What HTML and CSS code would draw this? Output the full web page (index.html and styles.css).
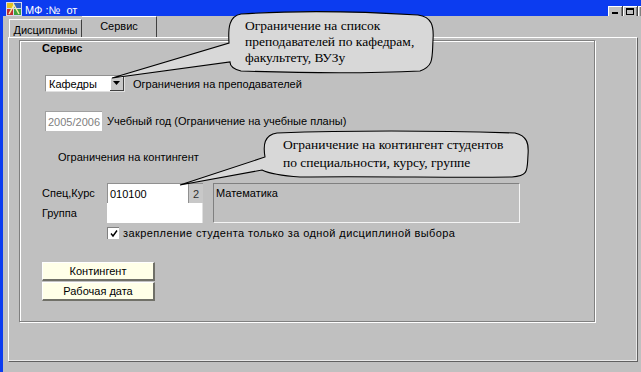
FILE: index.html
```html
<!DOCTYPE html>
<html lang="ru">
<head>
<meta charset="utf-8">
<title>МФ</title>
<link rel="stylesheet" href="styles.css">
</head>
<body>
<div class="window">
  <div class="titlebar">
    <svg class="appicon" viewBox="0 0 16 14" width="16" height="14">
      <rect x="0" y="0" width="16" height="14" fill="#d8d8f0"/>
      <rect x="1" y="1" width="6" height="5" fill="#e0c020"/>
      <rect x="8" y="1" width="7" height="5" fill="#3060c0"/>
      <rect x="1" y="7" width="6" height="6" fill="#c03030"/>
      <rect x="8" y="7" width="7" height="6" fill="#40a040"/>
      <path d="M3 12 L8 3 L13 12" fill="none" stroke="#f8f0a0" stroke-width="1.5"/>
    </svg>
    <span class="title">МФ :№  от</span>
    <div class="tbtns">
      <span class="tbtn"><span class="g-min"></span></span>
      <span class="tbtn"><span class="g-max"></span></span>
      <span class="tbtn cut"></span>
    </div>
  </div>

  <div class="tabs">
    <div class="tab disc">Дисциплины</div>
    <div class="tab serv">Сервис</div>
  </div>

  <div class="panel">
    <div class="group">
      <div class="gtitle">Сервис</div>

      <div class="row r-dept">
        <div class="combo">
          <span class="combo-text">Кафедры</span>
          <span class="combo-btn"><svg viewBox="0 0 7 4" width="7" height="4"><path d="M0 0 H7 L3.5 4 Z" fill="#000"/></svg></span>
        </div>
        <span class="lbl-dept">Ограничения на преподавателей</span>
      </div>

      <div class="row r-year">
        <div class="field-year">2005/2006</div>
        <span class="lbl-year">Учебный год (Ограничение на учебные планы)</span>
      </div>

      <div class="sect">Ограничения на контингент</div>

      <div class="contgrid">
        <span class="glbl l-spec">Спец,Курс</span>
        <div class="spec"><span class="spec-code">010100</span><span class="spec-course">2</span></div>
        <div class="specname">Математика</div>
        <span class="glbl l-grp">Группа</span>
        <div class="grp"></div>
      </div>

      <div class="chk">
        <span class="chkbox"><svg viewBox="0 0 10 10" width="10" height="10"><path d="M2 4.5 L4 7 L8 1.5" fill="none" stroke="#000" stroke-width="1.4"/></svg></span>
        <span class="chklbl">закрепление студента только за одной дисциплиной выбора</span>
      </div>

      <div class="btns">
        <div class="btn">Контингент</div>
        <div class="btn">Рабочая дата</div>
      </div>
    </div>
  </div>

  <div class="callouts">
    <svg class="balloons" viewBox="0 0 641 372" width="641" height="372">
      <path d="M241 14 C300 10 370 12 418 15 C432 17 434 26 433 40 C432 58 434 66 420 71 C360 74 300 73 241 71 C233 69 230 66 230 62 L112 78 L229 43 C228 28 229 16 241 14 Z" fill="#d8d8d8" stroke="#000" stroke-width="1.1"/>
      <path d="M277 133 C360 130 450 131 515 133 C527 136 529 143 528 155 C527 170 529 176 512 177 C450 178 380 176 300 177 C285 176 270 174 262 170 L180 185 L265 157 C263 145 264 135 277 133 Z" fill="#d8d8d8" stroke="#000" stroke-width="1.1"/>
    </svg>
    <div class="ctext c1">Ограничение на список<br>преподавателей по кафедрам,<br>факультету, ВУЗу</div>
    <div class="ctext c2">Ограничение на контингент студентов<br>по специальности, курсу, группе</div>
  </div>
</div>
</body>
</html>
```

FILE: styles.css
```css
* { box-sizing: border-box; }
html, body { margin: 0; padding: 0; }
body {
  width: 641px;
  height: 372px;
  overflow: hidden;
  background: #c0c0c0;
  font-family: "Liberation Sans", Arial, sans-serif;
  font-size: 11px;
  color: #000;
}

.window {
  position: relative;
  width: 641px;
  height: 372px;
  border-left: 3px solid #0c3cf0;
  background: #c0c0c0;
}

/* title bar */
.titlebar {
  height: 16px;
  background: #0c3cf0;
  display: flex;
  align-items: flex-start;
  color: #fff;
  padding-left: 3px;
}
.appicon { margin-top: 2px; flex: none; }
.title {
  margin-left: 3px;
  margin-top: 4px;
  white-space: pre;
  font-size: 11px;
  line-height: 12px;
}
.tbtns {
  margin-left: auto;
  display: flex;
  margin-top: 6px;
}
.tbtn {
  width: 15px;
  height: 10px;
  background: #c0c0c0;
  border-right: 1px solid #404040;
  box-shadow: inset 1px 1px 0 #fff, inset -1px 0 0 #808080;
  position: relative;
  display: flex;
  align-items: flex-end;
  justify-content: center;
}
.tbtn.cut { width: 3px; border-right: 0; }
.g-min {
  width: 6px;
  height: 2px;
  background: #000;
  margin-bottom: 2px;
}
.g-max {
  width: 8px;
  height: 7px;
  border: 1px solid #000;
  border-top-width: 2px;
  margin-bottom: 1px;
}

/* tabs */
.tabs {
  display: flex;
  align-items: flex-end;
  height: 21px;
  padding-left: 6px;
}
.tab {
  display: flex;
  align-items: center;
  justify-content: center;
  background: #c0c0c0;
  border-top: 1px solid #fff;
  border-left: 1px solid #fff;
  border-right: 1px solid #404040;
  font-size: 11px;
}
.tab.disc { width: 73px; height: 18px; padding-top: 3px; }
.tab.serv { width: 75px; height: 21px; border-left: 0; padding-bottom: 2px; }

/* panel */
.panel {
  margin-left: 5px;
  width: 630px;
  height: 325px;
  border-top: 1px solid #fff;
  border-left: 1px solid #fff;
  border-right: 1px solid #606060;
  border-bottom: 1px solid #606060;
  box-shadow: inset -1px -1px 0 #e8e8e8;
}

.group {
  margin: 2px 0 0 10px;
  width: 576px;
  height: 282px;
  border: 1px solid #808080;
  box-shadow: 1px 1px 0 #fff, inset 1px 1px 0 #fff;
  display: flex;
  flex-direction: column;
  align-items: flex-start;
}

.gtitle {
  margin: 1px 0 0 22px;
  font-weight: bold;
  line-height: 13px;
}

.row {
  display: flex;
  align-items: center;
}
.r-dept { margin: 20px 0 0 25px; }
.combo {
  width: 80px;
  height: 17px;
  background: #fff;
  border-top: 1px solid #909090;
  border-left: 1px solid #909090;
  border-right: 1px solid #e0e0e0;
  border-bottom: 1px solid #e0e0e0;
  display: flex;
  align-items: center;
  justify-content: space-between;
}
.combo-text { padding-left: 3px; }
.combo-btn {
  width: 14px;
  height: 14px;
  background: #c8c8c8;
  border-right: 1px solid #404040;
  border-bottom: 1px solid #404040;
  box-shadow: inset 1px 1px 0 #fff;
  display: flex;
  align-items: center;
  justify-content: center;
}
.lbl-dept { margin-left: 8px; }

.r-year { margin: 19px 0 0 25px; }
.field-year {
  width: 57px;
  height: 20px;
  background: #fff;
  color: #808080;
  border-top: 1px solid #a0a0a0;
  border-left: 1px solid #a0a0a0;
  display: flex;
  align-items: center;
  padding-left: 2px;
}
.lbl-year { margin-left: 5px; }

.sect {
  margin: 20px 0 0 38px;
  line-height: 13px;
}

.contgrid {
  margin: 19px 0 0 22px;
  display: grid;
  grid-template-columns: 65px 96px 10px 307px;
  grid-template-rows: 20px 20px;
}
.glbl { display: flex; align-items: center; }
.l-spec { grid-column: 1; grid-row: 1; }
.l-grp { grid-column: 1; grid-row: 2; }
.spec {
  grid-column: 2;
  grid-row: 1;
  display: flex;
  border-top: 1px solid #909090;
  border-left: 1px solid #909090;
}
.spec-code {
  flex: 1;
  background: #fff;
  display: flex;
  align-items: center;
  padding-left: 2px;
}
.spec-course {
  width: 15px;
  background: #c8c8c8;
  border-left: 1px solid #909090;
  color: #303030;
  display: flex;
  align-items: center;
  justify-content: center;
}
.specname {
  grid-column: 4;
  grid-row: 1 / span 2;
  border-top: 1px solid #808080;
  border-left: 1px solid #808080;
  border-right: 1px solid #f4f4f4;
  border-bottom: 1px solid #f4f4f4;
  padding: 3px 0 0 2px;
}
.grp {
  grid-column: 2;
  grid-row: 2;
  background: #fff;
  border-right: 1px solid #e0e0e0;
}

.chk {
  margin: 4px 0 0 87px;
  display: flex;
  align-items: center;
}
.chkbox {
  width: 12px;
  height: 12px;
  background: #fff;
  border-top: 1px solid #808080;
  border-left: 1px solid #808080;
  display: flex;
  align-items: center;
  justify-content: center;
}
.chklbl { margin-left: 4px; letter-spacing: 0.4px; }

.btns {
  margin: 23px 0 0 22px;
  display: flex;
  flex-direction: column;
  gap: 1px;
}
.btn {
  width: 113px;
  height: 19px;
  background: #ffffe8;
  border-top: 1px solid #fff;
  border-left: 1px solid #fff;
  border-right: 2px solid #707068;
  border-bottom: 2px solid #707068;
  display: flex;
  align-items: center;
  justify-content: center;
}

/* callouts lying over the form */
.callouts {
  position: absolute;
  left: -3px;
  top: 0;
  width: 641px;
  height: 372px;
  pointer-events: none;
}
.balloons { position: absolute; left: 0; top: 0; }
.ctext {
  position: absolute;
  font-family: "Liberation Serif", "Times New Roman", serif;
  font-size: 13.5px;
  white-space: nowrap;
  color: #000;
}
.c1 { left: 245px; top: 18px; line-height: 16px; }
.c2 { left: 283px; top: 136px; line-height: 18px; }
```
